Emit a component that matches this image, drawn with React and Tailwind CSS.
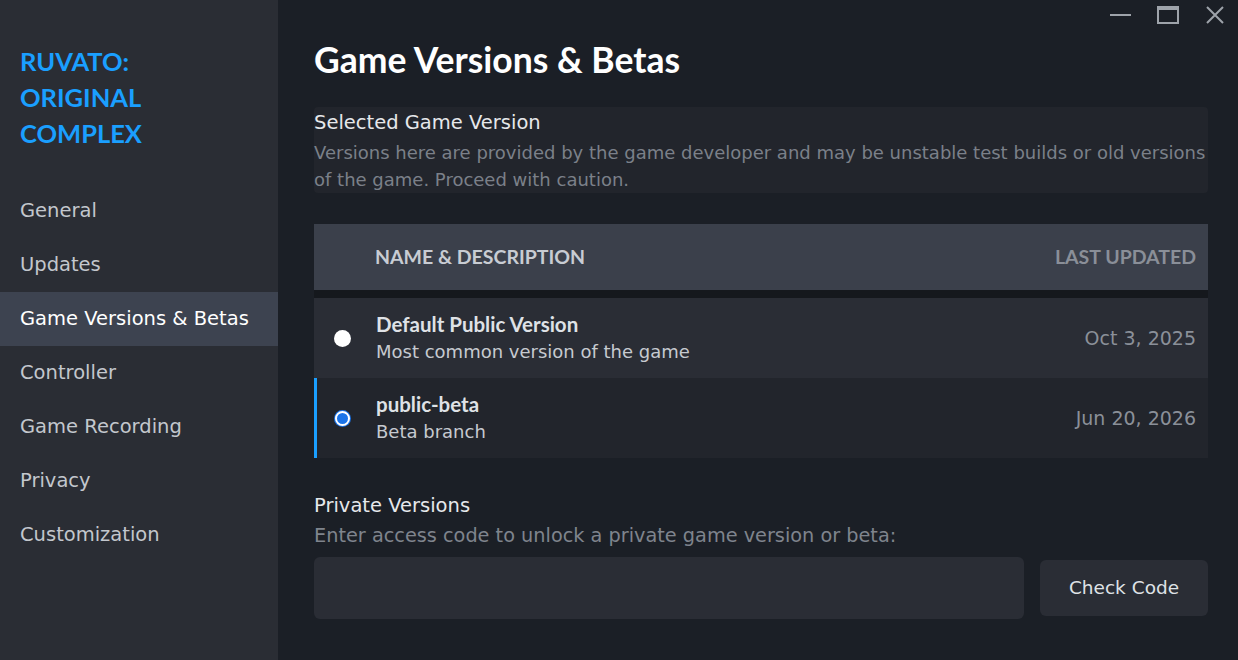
import { useState } from 'react';

const navItems = ['General', 'Updates', 'Game Versions & Betas', 'Controller', 'Game Recording', 'Privacy', 'Customization'];

const versions = [
    { id: 'default', name: 'Default Public Version', desc: 'Most common version of the game', date: 'Oct 3, 2025' },
    { id: 'public-beta', name: 'public-beta', desc: 'Beta branch', date: 'Jun 20, 2026' },
];

function Radio({ checked }) {
    if (checked) {
        return (
            <span className="w-[17px] h-[17px] rounded-full bg-[#1a73e8] flex items-center justify-center">
                <span className="w-[15px] h-[15px] rounded-full bg-[#1a73e8] border-2 border-white" />
            </span>
        );
    }
    return <span className="w-[17px] h-[17px] rounded-full bg-white" />;
}

export default function App() {
    const [selected, setSelected] = useState('public-beta');
    const active = 'Game Versions & Betas';

    return (
        <div className="flex w-[1238px] h-[660px] bg-[#1b1f26] overflow-hidden font-['DejaVu_Sans',sans-serif]">
            <aside className="w-[278px] shrink-0 bg-[#2a2d34] flex flex-col">
                <h1 className="px-5 pt-[43px] pb-[33px] text-[25.5px] leading-[36px] font-bold text-[#1a9fff] font-['Lato',sans-serif]">
                    RUVATO:<br />ORIGINAL<br />COMPLEX
                </h1>
                <nav className="flex flex-col">
                    {navItems.map((item) => (
                        <div
                            key={item}
                            className={`h-[54px] px-5 flex items-center text-[19.5px] ${item === active ? 'bg-[#3d4350] text-white' : 'text-[#c3c7cd]'}`}
                        >
                            {item}
                        </div>
                    ))}
                </nav>
            </aside>

            <main className="relative flex-1 pl-9 pr-[30px]">
                <div className="absolute top-0 right-0 flex items-center h-[30px] text-[#9ea3aa]">
                    <div className="w-12 flex justify-center">
                        <span className="block w-[21px] h-[2px] bg-[#9ea3aa]" />
                    </div>
                    <div className="w-12 flex justify-center">
                        <span className="block w-[22px] h-[18px] border-2 border-t-4 border-[#9ea3aa]" />
                    </div>
                    <div className="w-[46px] flex justify-center">
                        <svg width="20" height="20" viewBox="0 0 20 20" fill="none" stroke="#9ea3aa" strokeWidth="2">
                            <path d="M2 2 L18 18 M18 2 L2 18" />
                        </svg>
                    </div>
                </div>

                <h2 className="pt-[38px] text-[35.5px] leading-[44px] font-bold text-white font-['Lato',sans-serif]">
                    Game Versions &amp; Betas
                </h2>

                <section className="mt-[25px] h-[86px] bg-[#22252c] rounded-sm pt-[2px]">
                    <div className="text-[19.5px] leading-[27px] text-[#e6e8eb]">Selected Game Version</div>
                    <p className="mt-[3px] text-[18px] leading-[27px] text-[#7b8089]">
                        Versions here are provided by the game developer and may be unstable test builds or old versions of the game. Proceed with caution.
                    </p>
                </section>

                <div className="mt-[31px]">
                    <div className="h-[66px] bg-[#3b404b] flex items-center justify-between pl-[61px] pr-3 text-[19.5px] font-bold font-['Lato',sans-serif]">
                        <span className="text-[#c8ccd3]">NAME &amp; DESCRIPTION</span>
                        <span className="text-[#8a8f98]">LAST UPDATED</span>
                    </div>
                    <div className="h-[8px] bg-[#15181d]" />
                    {versions.map((v, i) => (
                        <div
                            key={v.id}
                            onClick={() => setSelected(v.id)}
                            className={`h-[80px] flex items-center border-l-[3px] ${selected === v.id ? 'border-[#1a9fff]' : 'border-transparent'} ${i === 0 ? 'bg-[#2a2d35]' : 'bg-[#22252c]'}`}
                        >
                            <div className="w-[50px] flex justify-center">
                                <Radio checked={selected === v.id} />
                            </div>
                            <div className="ml-[9px] flex-1 flex flex-col text-[18px] leading-[28px]">
                                <span className="font-bold text-[20.5px] text-[#dfe2e6] font-['Lato',sans-serif]">{v.name}</span>
                                <span className="text-[#c6cad0]">{v.desc}</span>
                            </div>
                            <span className="pr-3 text-[19px] text-[#8b9099]">{v.date}</span>
                        </div>
                    ))}
                </div>

                <section className="mt-[34px]">
                    <div className="text-[19.5px] leading-[28px] text-[#e6e8eb]">Private Versions</div>
                    <div className="text-[19.3px] leading-[32px] text-[#7f848d]">
                        Enter access code to unlock a private game version or beta:
                    </div>
                    <div className="mt-[5px] flex items-center gap-4">
                        <input className="flex-1 h-[62px] bg-[#2a2d35] rounded-md outline-none px-3 text-white" />
                        <button className="w-[168px] h-[56px] bg-[#2a2d35] rounded-md text-[18.5px] text-[#dfe2e6]">
                            Check Code
                        </button>
                    </div>
                </section>
            </main>
        </div>
    );
}
